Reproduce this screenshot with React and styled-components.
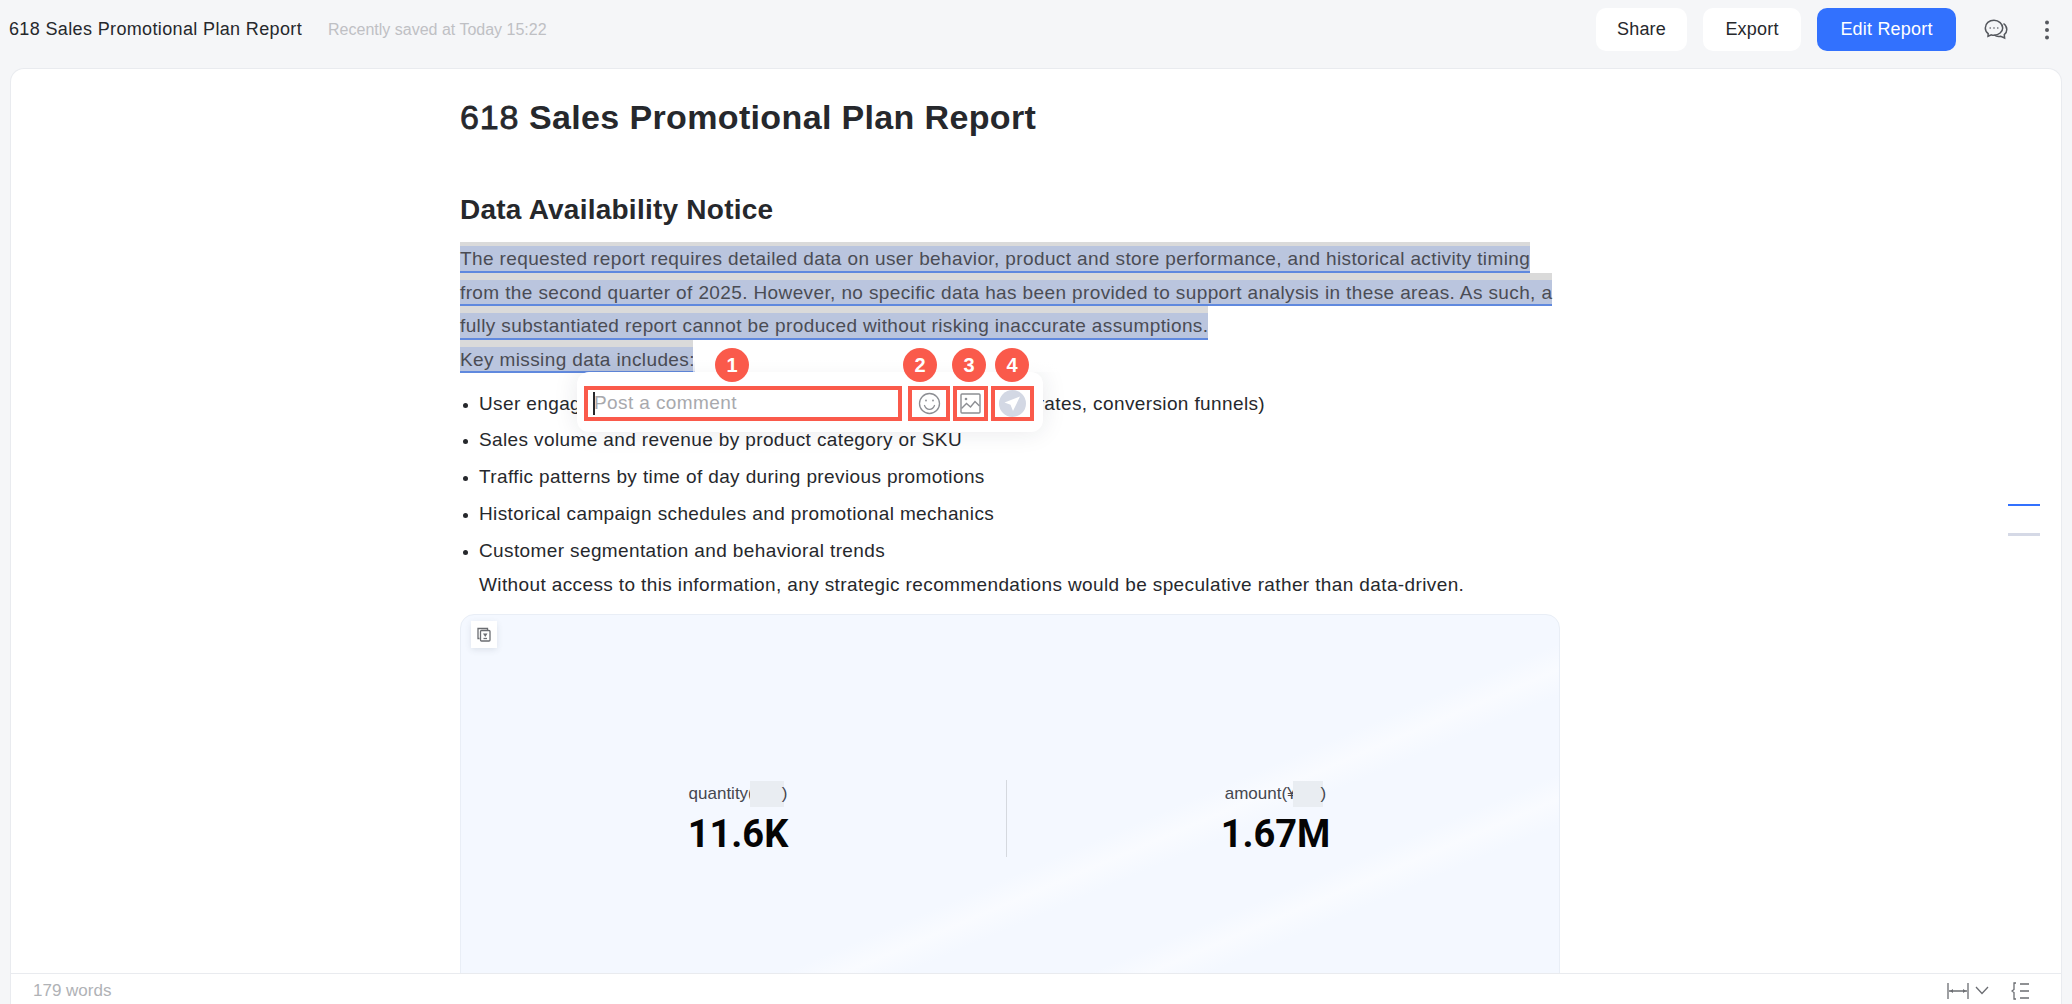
import styled, { createGlobalStyle } from 'styled-components';

const Global = createGlobalStyle`
	html, body {
		margin: 0;
		padding: 0;
		background: #f5f6f8;
		font-family: 'Liberation Sans', Arial, sans-serif;
		color: #26282c;
	}
	* { box-sizing: border-box; }
`;

const Page = styled.div`
	display: flex;
	flex-direction: column;
	height: 100vh;
	overflow: hidden;
`;

const Header = styled.header`
	display: flex;
	align-items: flex-start;
	justify-content: space-between;
	height: 68px;
	flex: none;
	padding: 8px 21px 0 9px;
`;

const TitleGroup = styled.div`
	display: flex;
	align-items: center;
	height: 43px;
	gap: 26px;
`;

const DocName = styled.div`
	font-size: 18px;
	letter-spacing: 0.36px;
	color: #26282c;
`;

const SavedAt = styled.div`
	font-size: 16px;
	color: #bfc0c4;
`;

const Actions = styled.div`
	display: flex;
	align-items: center;
	gap: 16px;
`;

const Button = styled.button`
	height: 43px;
	width: ${(p) => p.$width}px;
	border: 0;
	border-radius: 10px;
	padding: 0;
	font: 18px 'Liberation Sans', Arial, sans-serif;
	letter-spacing: 0.2px;
	color: ${(p) => (p.$primary ? '#fff' : '#26282c')};
	background: ${(p) => (p.$primary ? '#3271fe' : '#fff')};
`;

const IconSlot = styled.div`
	display: flex;
	align-items: center;
	justify-content: center;
	width: ${(p) => p.$width}px;
	margin-left: ${(p) => p.$gap}px;
	height: 43px;
	color: #55585e;
`;

const Sheet = styled.main`
	position: relative;
	flex: 1;
	min-height: 0;
	display: flex;
	flex-direction: column;
	margin: 0 10px;
	background: #fff;
	border: 1px solid #e9ebef;
	border-bottom: 0;
	border-radius: 14px 14px 0 0;
`;

const Scroll = styled.div`
	flex: 1;
	min-height: 0;
	overflow: hidden;
`;

const Doc = styled.article`
	width: 1100px;
	margin-left: 449px;
`;

const Title = styled.h1`
	margin: 28px 0 0;
	font-size: 34px;
	letter-spacing: 0.36px;
	line-height: 40px;
	font-weight: 700;
	color: #26282c;
`;

const TitleNum = styled.span`
	font-weight: 400;
	letter-spacing: 0.8px;
	-webkit-text-stroke: 0.8px #26282c;
`;

const Heading = styled.h2`
	margin: 53px 0 0;
	font-size: 28px;
	letter-spacing: 0.24px;
	line-height: 40px;
	font-weight: 700;
	color: #26282c;
`;

const Highlight = styled.div`
	width: fit-content;
	height: ${(p) => (p.$first ? 31 : 33.4)}px;
	padding-top: ${(p) => (p.$first ? 4 : 7)}px;
	font-size: 19px;
	letter-spacing: 0.38px;
	line-height: 25px;
	white-space: nowrap;
	color: #4a4c54;
	background: linear-gradient(
		#dadada 0,
		#dadada ${(p) => (p.$first ? 4 : 7)}px,
		#bac5de ${(p) => (p.$first ? 4 : 7)}px,
		#bac5de calc(100% - 2px),
		#6089de calc(100% - 2px),
		#6089de 100%
	);
	&:first-of-type {
		margin-top: 12px;
	}
`;

const List = styled.ul`
	margin: 13.6px 0 0;
	padding: 0 0 0 19px;
	font-size: 19px;
	letter-spacing: 0.38px;
	line-height: 34px;
	color: #26282c;
`;

const Item = styled.li`
	margin-bottom: 2.7px;
	&::marker {
		font-size: 15px;
	}
`;

const ChartCard = styled.section`
	position: relative;
	height: 560px;
	margin-top: 12px;
	border: 1px solid #e9eef6;
	border-radius: 14px;
	display: grid;
	grid-template-columns: 536px 538px;
	justify-content: center;
	padding: 165px 5px 0 0;
	align-items: start;
	background: linear-gradient(
		157deg,
		#f4f8ff 0,
		#f4f8ff 455px,
		#f9fbff 479px,
		#f4f8ff 503px,
		#f4f8ff 575px,
		#f9fbff 598px,
		#f4f8ff 622px,
		#f4f8ff 100%
	);
`;

const CornerTool = styled.div`
	position: absolute;
	left: 10px;
	top: 6px;
	width: 26px;
	height: 27px;
	display: flex;
	align-items: center;
	justify-content: center;
	background: #fff;
	box-shadow: 0 2px 6px rgba(60, 70, 90, 0.12);
	color: #6b6d72;
`;

const Metric = styled.div`
	display: flex;
	flex-direction: column;
	align-items: center;
	height: 77px;
	border-right: ${(p) => (p.$divider ? '1px solid #d5d9df' : '0')};
`;

const MetricLabel = styled.div`
	display: flex;
	align-items: center;
	height: 26px;
	margin-top: 1px;
	font-size: 17px;
	color: #45474f;
`;

const Redact = styled.span`
	display: inline-block;
	width: ${(p) => p.$width}px;
	height: 26px;
	margin-left: -4px;
	margin-right: -2px;
	background: #e9edf2;
`;

const MetricValue = styled.div`
	margin-top: 2px;
	font-family: Roboto, 'Liberation Sans', sans-serif;
	font-size: 38px;
	line-height: 50px;
	font-weight: 700;
	color: #050505;
`;

const Footer = styled.footer`
	display: flex;
	align-items: center;
	justify-content: space-between;
	flex: none;
	height: 31px;
	padding: 3px 32px 0 22px;
	border-top: 1px solid #e9ebef;
	background: #fff;
	font-size: 17px;
	color: #b0b2b6;
`;

const FooterIcons = styled.div`
	display: flex;
	align-items: center;
	gap: 22px;
	color: #6b6d72;
`;

const WidthPicker = styled.div`
	display: flex;
	align-items: center;
	gap: 6px;
`;

const Popup = styled.div`
	position: absolute;
	left: 566px;
	top: 303px;
	width: 466px;
	height: 60px;
	display: flex;
	align-items: flex-start;
	padding: 14px 0 0 7px;
	background: #fff;
	border-radius: 12px;
	box-shadow: 0 0 24px rgba(30, 40, 60, 0.1);
	&::before {
		content: '';
		position: absolute;
		left: 116px;
		top: -32px;
		width: 370px;
		height: 32px;
		background: linear-gradient(#fff 60%, rgba(255, 255, 255, 0.6));
	}
`;

const Marked = styled.div`
	position: relative;
	flex: none;
	display: flex;
	align-items: center;
	justify-content: center;
	width: ${(p) => p.$width}px;
	height: 35px;
	margin-left: ${(p) => p.$gap}px;
	border: 4px solid #fa5a4b;
`;

const CommentField = styled.div`
	display: flex;
	align-items: center;
	justify-content: flex-start;
	width: 100%;
	padding: 0 0 1px 5px;
	font-size: 19px;
	letter-spacing: 0.4px;
	color: #a8a9ad;
`;

const Caret = styled.span`
	width: 2px;
	height: 23px;
	margin-right: -1px;
	background: #26282c;
`;

const Badge = styled.span`
	position: absolute;
	left: ${(p) => p.$left}px;
	top: -42px;
	width: 34px;
	height: 34px;
	display: flex;
	align-items: center;
	justify-content: center;
	border-radius: 50%;
	background: #fa5a4b;
	color: #fff;
	font-size: 20px;
	font-weight: 700;
`;

const Outline = styled.div`
	position: absolute;
	right: 21px;
	top: 435px;
	display: flex;
	flex-direction: column;
	gap: 27px;
`;

const OutlineMark = styled.span`
	display: block;
	width: 32px;
	height: ${(p) => (p.$active ? 2 : 3)}px;
	background: ${(p) => (p.$active ? '#3271fe' : '#d5d9e6')};
`;

const ChatIcon = () => (
	<svg width='26' height='24' viewBox='0 0 26 24' fill='none' stroke='currentColor' strokeWidth='1.5'>
		<path d='M11 2.2c-4.8 0-8.7 3.4-8.7 7.7 0 2.3 1.1 4.3 2.9 5.7l-.2 2.7 3.4-1.4c.8.2 1.7.3 2.6.3 4.8 0 8.7-3.4 8.7-7.3S15.800 2.200 11 2.200z' />
		<path d='M20.500 5.500c2 1.400 3.300 3.500 3.300 5.900 0 2-1 3.900-2.500 5.200l.3 3.400-3.900-1.700c-2.300.6-4.700.1-6.500-1.300' />
		<circle cx='7.200' cy='10' r='.8' fill='currentColor' stroke='none' />
		<circle cx='11' cy='10' r='.8' fill='currentColor' stroke='none' />
		<circle cx='14.800' cy='10' r='.8' fill='currentColor' stroke='none' />
	</svg>
);

const MoreIcon = () => (
	<svg width='6' height='22' viewBox='0 0 6 22' fill='#55585e'>
		<circle cx='3' cy='3.500' r='2' />
		<circle cx='3' cy='11' r='2' />
		<circle cx='3' cy='18.500' r='2' />
	</svg>
);

const SmileIcon = () => (
	<svg width='23' height='23' viewBox='0 0 23 23' fill='none' stroke='#8c8e93' strokeWidth='1.300'>
		<circle cx='11.500' cy='11.500' r='10' />
		<path d='M6.500 13.500c1 2.600 3 3.800 5 3.800s4-1.200 5-3.800' strokeLinecap='round' />
		<circle cx='8' cy='8.500' r='.9' fill='#8c8e93' stroke='none' />
		<circle cx='15' cy='8.500' r='.9' fill='#8c8e93' stroke='none' />
	</svg>
);

const ImageIcon = () => (
	<svg width='21' height='21' viewBox='0 0 21 21' fill='none' stroke='#8c8e93' strokeWidth='1.400'>
		<rect x='1' y='1' width='19' height='19' rx='1' />
		<path d='M1.500 15.500l5-5 4 3.500 4.500-5.500 4.500 4.500' />
		<circle cx='6' cy='6' r='1.300' fill='#8c8e93' stroke='none' />
	</svg>
);

const SendIcon = () => (
	<svg width='27' height='27' viewBox='0 0 27 27'>
		<circle cx='13.500' cy='13.500' r='13.500' fill='#d3d8e4' />
		<path d='M21 6.500L5.500 12.500l6 2.200 2.500 6.300z' fill='#fff' />
	</svg>
);

const ArchiveIcon = () => (
	<svg width='14' height='15' viewBox='0 0 14 15' fill='none' stroke='currentColor' strokeWidth='1.300'>
		<path d='M2.500 11.500H1V1.500h9.500V3' />
		<rect x='3.500' y='3.500' width='9.500' height='10.500' rx='1' />
		<path d='M6 6.500h4.500L8.250 10z' fill='currentColor' stroke='none' />
		<path d='M6.500 11.500h3.500' />
	</svg>
);

const FitWidthIcon = () => (
	<svg width='22' height='18' viewBox='0 0 22 18' fill='none' stroke='currentColor' strokeWidth='1.300'>
		<path d='M1 1v16M21 1v16M2 9h18' />
		<path d='M6 7L3 9l3 2zM16 7l3 2-3 2z' fill='currentColor' stroke='none' />
	</svg>
);

const ChevronIcon = () => (
	<svg width='14' height='9' viewBox='0 0 14 9' fill='none' stroke='currentColor' strokeWidth='1.300'>
		<path d='M1 1l6 6.500L13 1' />
	</svg>
);

const OutlineIcon = () => (
	<svg width='18' height='18' viewBox='0 0 18 18' fill='none' stroke='currentColor' strokeWidth='1.300'>
		<path d='M5 1H3v6.500L1 9l2 1.500V17h2M9 2h9M9 9h9M9 16h9' />
	</svg>
);

const missing = [
	'Sales volume and revenue by product category or SKU',
	'Traffic patterns by time of day during previous promotions',
	'Historical campaign schedules and promotional mechanics'
];

export default function App() {
	return (
		<Page>
			<Global />
			<Header>
				<TitleGroup>
					<DocName>618 Sales Promotional Plan Report</DocName>
					<SavedAt>Recently saved at Today 15:22</SavedAt>
				</TitleGroup>
				<Actions>
					<Button $width={91}>Share</Button>
					<Button $width={98}>Export</Button>
					<Button $width={139} $primary>Edit Report</Button>
					<IconSlot $width={30} $gap={9}><ChatIcon /></IconSlot>
					<IconSlot $width={8} $gap={16}><MoreIcon /></IconSlot>
				</Actions>
			</Header>
			<Sheet>
				<Scroll>
					<Doc>
						<Title><TitleNum>618</TitleNum> Sales Promotional Plan Report</Title>
						<Heading>Data Availability Notice</Heading>
						<Highlight $first>The requested report requires detailed data on user behavior, product and store performance, and historical activity timing</Highlight>
						<Highlight>from the second quarter of 2025. However, no specific data has been provided to support analysis in these areas. As such, a</Highlight>
						<Highlight>fully substantiated report cannot be produced without risking inaccurate assumptions.</Highlight>
						<Highlight>Key missing data includes:</Highlight>
						<List>
							<Item>User engagement metrics (e.g., click-through rates, add-to-cart rates, conversion funnels)</Item>
							{missing.map((text) => (
								<Item key={text}>{text}</Item>
							))}
							<Item>
								Customer segmentation and behavioral trends
								<br />
								Without access to this information, any strategic recommendations would be speculative rather than data-driven.
							</Item>
						</List>
						<ChartCard>
							<CornerTool><ArchiveIcon /></CornerTool>
							<Metric $divider>
								<MetricLabel>quantity(<Redact $width={34} />)</MetricLabel>
								<MetricValue>11.6K</MetricValue>
							</Metric>
							<Metric>
								<MetricLabel>amount(¥<Redact $width={30} />)</MetricLabel>
								<MetricValue>1.67M</MetricValue>
							</Metric>
						</ChartCard>
					</Doc>
				</Scroll>
				<Footer>
					<span>179 words</span>
					<FooterIcons>
						<WidthPicker><FitWidthIcon /><ChevronIcon /></WidthPicker>
						<OutlineIcon />
					</FooterIcons>
				</Footer>
				<Popup>
					<Marked $width={318}>
						<Badge $left={127}>1</Badge>
						<CommentField><Caret />Post a comment</CommentField>
					</Marked>
					<Marked $width={42} $gap={6}>
						<Badge $left={-9}>2</Badge>
						<SmileIcon />
					</Marked>
					<Marked $width={35} $gap={3}>
						<Badge $left={-5}>3</Badge>
						<ImageIcon />
					</Marked>
					<Marked $width={43} $gap={3}>
						<Badge $left={0}>4</Badge>
						<SendIcon />
					</Marked>
				</Popup>
				<Outline>
					<OutlineMark $active />
					<OutlineMark />
				</Outline>
			</Sheet>
		</Page>
	);
}
